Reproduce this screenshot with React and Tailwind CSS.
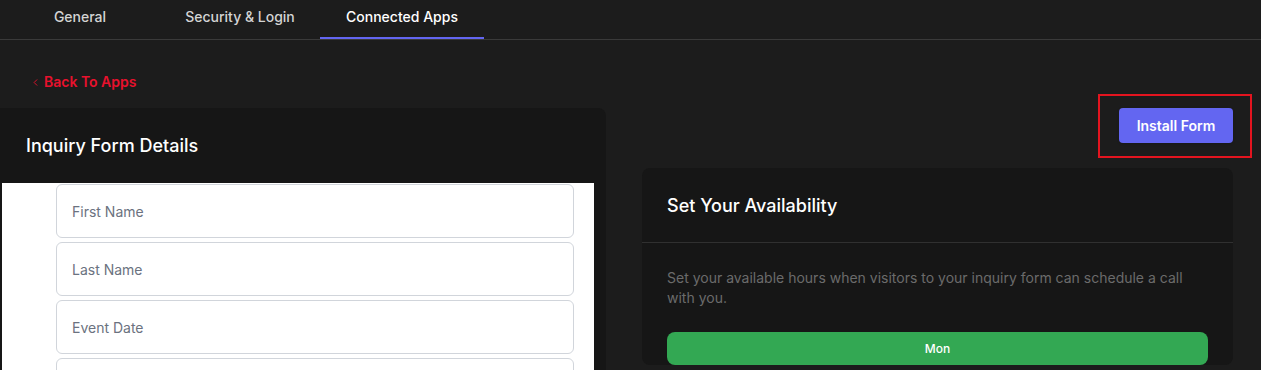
import { ChevronLeft } from "lucide-react";

const tabs = [
  { label: "General", width: "w-[160px]" },
  { label: "Security & Login", width: "w-[160px]" },
  { label: "Connected Apps", width: "w-[164px]", active: true },
];

const fields = ["First Name", "Last Name", "Event Date", ""];

export default function App() {
  return (
    <div
      className="h-[370px] w-full overflow-hidden bg-[#1c1c1c] text-white"
      style={{ fontFamily: "Inter, 'Open Sans', sans-serif" }}
    >
      <nav className="flex h-[40px] border-b border-[#3a3a3a]">
        {tabs.map((tab) => (
          <div
            key={tab.label}
            className={`${tab.width} flex h-full items-start justify-center pt-[6px] text-[14px] font-medium ${
              tab.active
                ? "border-b-2 border-[#6366f1] text-white"
                : "text-[#d4d4d4]"
            }`}
          >
            {tab.label}
          </div>
        ))}
      </nav>

      <div className="flex h-[68px] items-start pl-[30px] pt-[32px]">
        <a className="flex items-center gap-[3px] text-[14px] leading-5 font-semibold text-[#e8112d]">
          <ChevronLeft size={11} strokeWidth={2} />
          Back To Apps
        </a>
      </div>

      <div className="flex">
        <section className="w-[606px] shrink-0 rounded-tr-lg bg-[#161616]">
          <div className="flex h-[75px] items-center px-[26px]">
            <h2 className="text-[18px] font-medium">Inquiry Form Details</h2>
          </div>
          <div className="pl-[2px] pr-[12px]">
            <div className="flex h-[200px] flex-col gap-[4px] bg-white pl-[54px] pr-[20px] pt-[1px]">
              {fields.map((f, i) => (
                <div
                  key={i}
                  className="flex h-[54px] shrink-0 items-center rounded-md border border-[#d1d5db] px-[15px] text-[14px] text-[#6b7280]"
                >
                  {f}
                </div>
              ))}
            </div>
          </div>
        </section>

        <div className="ml-[36px] mr-[28px] flex-1">
          <div className="relative flex justify-end">
            <button className="h-[35px] w-[114px] rounded bg-[#6366f1] text-[14px] font-semibold text-white shadow">
              Install Form
            </button>
            <div className="pointer-events-none absolute left-[456px] top-[-14px] h-[64px] w-[154px] border-2 border-[#e3141f]" />
          </div>

          <section className="mt-[25px] rounded-lg bg-[#161616]">
            <div className="flex h-[75px] items-center border-b border-[#303030] px-[25px]">
              <h2 className="text-[18px] font-medium">Set Your Availability</h2>
            </div>
            <div className="px-[25px] pt-[25px]">
              <p className="text-[14px] leading-5 text-[#6b6b6b]">
                Set your available hours when visitors to your inquiry form can schedule a call
                with you.
              </p>
              <button className="mt-[24px] h-[33px] w-full rounded-lg bg-[#33a853] text-[12px] font-medium text-white">
                Mon
              </button>
            </div>
          </section>
        </div>
      </div>
    </div>
  );
}
